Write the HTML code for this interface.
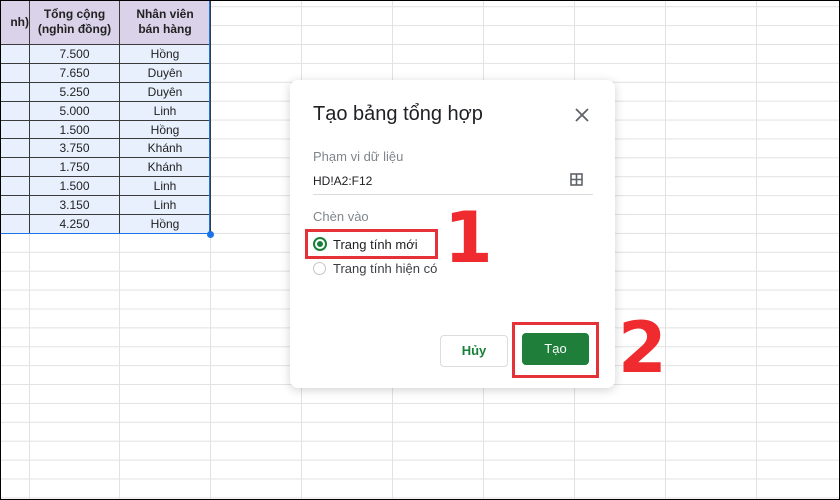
<!DOCTYPE html>
<html><head><meta charset="utf-8"><style>
body{margin:0;width:840px;height:500px;overflow:hidden;font-family:"Liberation Sans",Arial,sans-serif;position:relative;background:#fff}
.grid{position:absolute;left:0;top:0;width:840px;height:500px;
background-image:linear-gradient(to bottom,#e2e2e2 1px,transparent 1px);background-size:100% 18.9px;background-position:0 44px}
.v{position:absolute;top:0;height:500px;width:1px;background:#e2e2e2}
table{position:absolute;left:-1px;top:-1px;border-collapse:collapse;font-size:12px;color:#222}
td{border:1px solid #3a3a3a;text-align:center;height:17.9px;padding:0;background:#e8f0fd}
tr.h td{background:#d9d2e9;font-weight:bold;height:44px;line-height:15px}
.dlg{position:absolute;left:290px;top:80px;width:325px;height:308px;background:#fff;border-radius:8px;box-shadow:0 2px 10px rgba(0,0,0,.18)}
.t{position:absolute;white-space:nowrap}
.red{position:absolute;border:3px solid #e53238}
.num{position:absolute;color:#ef2b2f;font-weight:bold;font-family:"DejaVu Sans",sans-serif}
</style></head><body>
<div class="grid"></div>
<div class="v" style="left:301px"></div><div class="v" style="left:392px"></div><div class="v" style="left:483px"></div><div class="v" style="left:574px"></div><div class="v" style="left:665px"></div><div class="v" style="left:756px"></div>
<div class="v" style="left:29px;top:234px;height:266px"></div><div class="v" style="left:119px;top:234px;height:266px"></div><div class="v" style="left:210px;top:234px;height:266px"></div>
<table>
<tr class="h"><td style="width:29px;text-align:right">nh)</td><td style="width:89px">Tổng cộng<br>(nghìn đồng)</td><td style="width:90px">Nhân viên<br>bán hàng</td></tr>
<tr><td></td><td>7.500</td><td>Hồng</td></tr>
<tr><td></td><td>7.650</td><td>Duyên</td></tr>
<tr><td></td><td>5.250</td><td>Duyên</td></tr>
<tr><td></td><td>5.000</td><td>Linh</td></tr>
<tr><td></td><td>1.500</td><td>Hồng</td></tr>
<tr><td></td><td>3.750</td><td>Khánh</td></tr>
<tr><td></td><td>1.750</td><td>Khánh</td></tr>
<tr><td></td><td>1.500</td><td>Linh</td></tr>
<tr><td></td><td>3.150</td><td>Linh</td></tr>
<tr><td></td><td>4.250</td><td>Hồng</td></tr>
</table>
<div style="position:absolute;left:0;top:233px;width:211px;height:1px;background:#1a73e8"></div>
<div style="position:absolute;left:209px;top:0;width:1px;height:234px;background:#1a73e8"></div>
<div style="position:absolute;left:207px;top:231px;width:7px;height:7px;border-radius:50%;background:#1a73e8"></div>
<div class="dlg">
<div class="t" style="left:23px;top:23px;font-size:20px;color:#202124">Tạo bảng tổng hợp</div>
<svg style="position:absolute;left:285px;top:28px" width="14" height="14"><path d="M1 1L13 13M13 1L1 13" stroke="#5f6368" stroke-width="1.8"/></svg>
<div class="t" style="left:23px;top:69px;font-size:13px;color:#80868b">Phạm vi dữ liệu</div>
<div class="t" style="left:23px;top:94px;font-size:12px;color:#202124">HD!A2:F12</div>
<svg style="position:absolute;left:280px;top:93px" width="13" height="13"><rect x="1" y="1" width="11" height="11" fill="none" stroke="#5f6368" stroke-width="1.6"/><path d="M6.5 1V12M1 6.5H12" stroke="#5f6368" stroke-width="1.6"/></svg>
<div style="position:absolute;left:23px;top:114px;width:280px;height:1px;background:#dadce0"></div>
<div class="t" style="left:23px;top:129px;font-size:13px;color:#80868b">Chèn vào</div>
<div style="position:absolute;left:23px;top:157px;width:10px;height:10px;border:2px solid #188038;border-radius:50%"></div>
<div style="position:absolute;left:27px;top:161px;width:6px;height:6px;background:#188038;border-radius:50%"></div>
<div class="t" style="left:43px;top:157px;font-size:13px;color:#202124">Trang tính mới</div>
<div style="position:absolute;left:23px;top:182px;width:11px;height:11px;border:1.5px solid #c4c7c5;border-radius:50%"></div>
<div class="t" style="left:43px;top:181px;font-size:13px;color:#3c4043">Trang tính hiện có</div>
<div style="position:absolute;left:150px;top:255px;width:66px;height:30px;border:1px solid #dadce0;border-radius:4px;text-align:center;line-height:30px;font-size:13px;font-weight:bold;color:#188038">Hủy</div>
<div style="position:absolute;left:232px;top:253px;width:67px;height:32px;background:#1e7e3a;border-radius:4px;text-align:center;line-height:32px;font-size:13px;color:#fff">Tạo</div>
</div>
<div class="red" style="left:305px;top:229px;width:127px;height:24px"></div>
<div class="red" style="left:512px;top:322px;width:81px;height:50px"></div>
<div class="num" style="left:444px;top:203px;font-size:70px;line-height:70px">1</div>
<div class="num" style="left:618px;top:313px;font-size:70px;line-height:70px">2</div>
<div style="position:absolute;left:0;top:0;width:838px;height:498px;border:1px solid #000"></div>
</body></html>
